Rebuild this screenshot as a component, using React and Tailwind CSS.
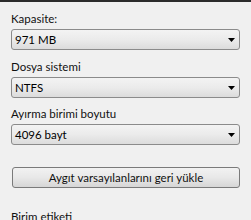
import React from "react";

function Combo({ value }) {
  return (
    <div className="relative mt-[2px] flex h-[21px] items-center rounded-[3px] border border-[#8b8b8b] bg-gradient-to-b from-[#f3f3f3] via-[#ebebeb] to-[#dcdcdc] pl-[3px] text-black">
      <span className="leading-none">{value}</span>
      <svg
        className="absolute right-[4px] top-[8px]"
        width="7"
        height="4"
        viewBox="0 0 7 4"
      >
        <path d="M0 0h7L3.5 4z" fill="#000" />
      </svg>
    </div>
  );
}

export default function App() {
  return (
    <div
      className="h-[220px] w-[251px] overflow-hidden bg-[#f0f0f0] text-[11.5px] text-[#111]"
      style={{ fontFamily: 'Lato, "Noto Sans", sans-serif' }}
    >
      <div className="h-[2px] bg-[#2b2b2b]" />
      <div className="pl-[11px] pr-[11px]">
        <div className="mt-[9px] h-[16px] leading-[16px]">Kapasite:</div>
        <Combo value="971 MB" />
        <div className="mt-[9px] h-[16px] leading-[16px]">Dosya sistemi</div>
        <Combo value="NTFS" />
        <div className="mt-[8px] h-[16px] leading-[16px]">Ayırma birimi boyutu</div>
        <Combo value="4096 bayt" />
        <button className="mt-[22px] ml-[1px] flex h-[21px] w-[228px] items-center justify-center rounded-[3px] border border-[#7a7a7a] bg-gradient-to-b from-[#f2f2f2] via-[#e8e8e8] to-[#d6d6d6] leading-none">
          Aygıt varsayılanlarını geri yükle
        </button>
        <div className="mt-[21px] h-[16px] leading-[16px]">Birim etiketi</div>
      </div>
    </div>
  );
}
